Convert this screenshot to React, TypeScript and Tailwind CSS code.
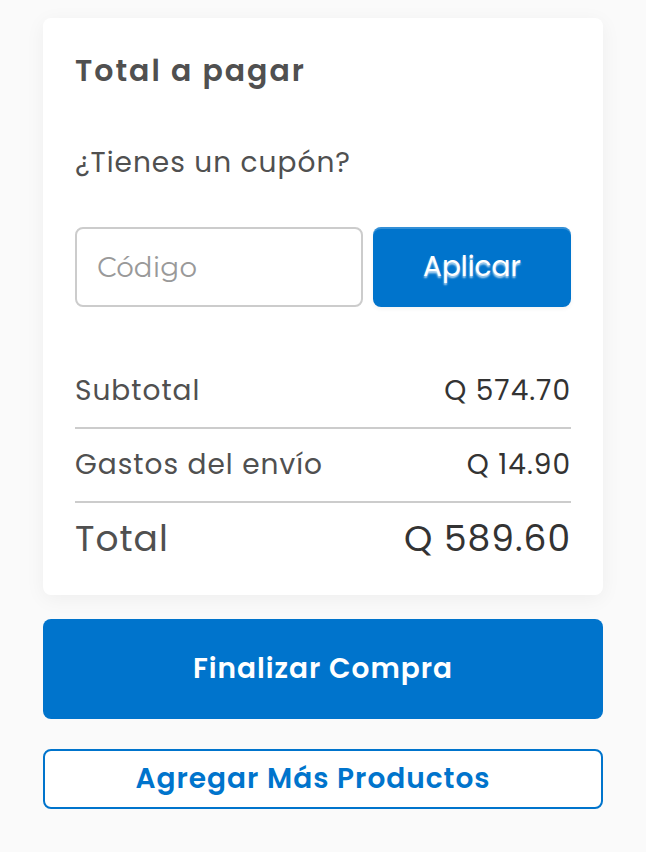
import clsx from "clsx";

const rows = [
  { label: "Subtotal", amount: "Q 574.70" },
  { label: "Gastos del envío", amount: "Q 14.90" },
  { label: "Total", amount: "Q 589.60", isTotal: true },
];

function CouponForm() {
  return (
    <form onSubmit={(e) => e.preventDefault()}>
      <label htmlFor="coupon" className="block text-[28px] leading-10">
        ¿Tienes un cupón?
      </label>
      <div className="mt-11 flex gap-2.5">
        <input
          id="coupon"
          type="text"
          placeholder="Código"
          className="h-20 min-w-0 flex-1 rounded-lg border-2 border-[#cccccc] bg-white px-5 font-[Montserrat,Poppins,Lato,sans-serif] text-[28px] tracking-normal placeholder:text-[#999999]"
        />
        <button
          type="submit"
          className="h-20 w-[198px] rounded-lg bg-[#0074cc] text-[28px] tracking-normal text-white shadow-[inset_0_2px_0_rgb(255_255_255/0.2),0_2px_4px_rgb(0_0_0/0.05)] text-shadow-[0_2px_2px_rgb(255_255_255/0.75)]"
        >
          Aplicar
        </button>
      </div>
    </form>
  );
}

function Summary() {
  return (
    <table className="mt-[47px] w-full">
      <tbody>
        {rows.map(({ label, amount, isTotal }) => (
          <tr
            key={label}
            className={clsx(
              isTotal
                ? "h-[73px] text-[36px]"
                : "h-[74px] border-b-2 border-[#cccccc] text-[28px]",
            )}
          >
            <th scope="row" className="p-0 text-left font-normal">
              {label}
            </th>
            <td className="p-0 text-right text-[#333333]">{amount}</td>
          </tr>
        ))}
      </tbody>
    </table>
  );
}

export default function App() {
  return (
    <main className="min-h-screen bg-[#fafafa] px-[43px] pt-[18px] pb-11 font-[Poppins,Lato,sans-serif] tracking-[1px] text-[#505050]">
      <section className="rounded-lg bg-white px-8 pt-[33px] pb-5 shadow-[0_4px_20px_rgb(0_0_0/0.05)]">
        <h2 className="mb-[52px] text-[30px] leading-10 font-semibold tracking-[2px]">
          Total a pagar
        </h2>
        <CouponForm />
        <Summary />
      </section>
      <button
        type="button"
        className="mt-6 h-[100px] w-full rounded-lg bg-[#0074cc] text-[28px] font-semibold text-white"
      >
        Finalizar Compra
      </button>
      <a
        href="#productos"
        className="mt-[30px] flex h-[60px] items-center justify-center rounded-lg border-2 border-[#0074cc] bg-white pr-5 text-[28px] font-semibold text-[#0074cc]"
      >
        Agregar Más Productos
      </a>
    </main>
  );
}
